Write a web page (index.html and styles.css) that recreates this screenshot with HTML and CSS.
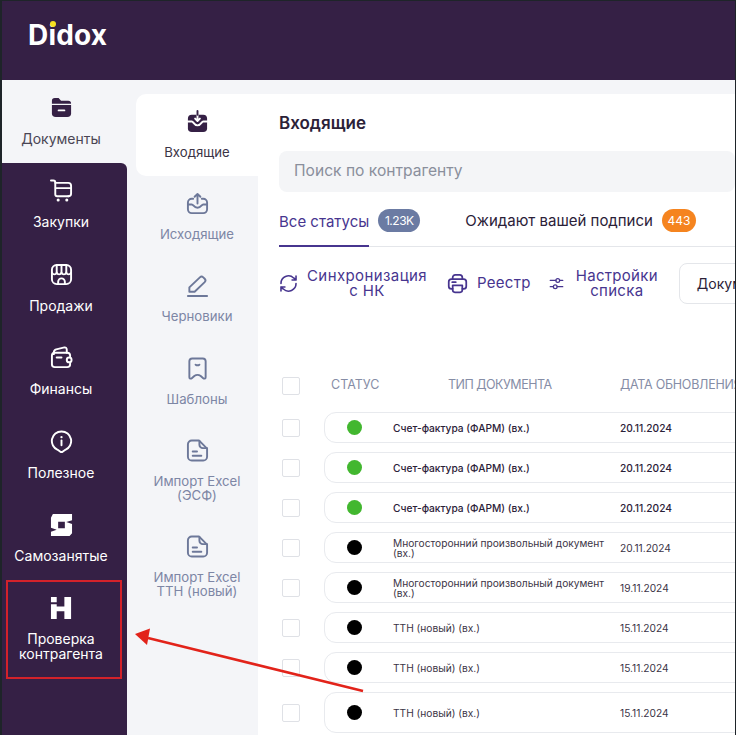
FILE: index.html
```html
<!DOCTYPE html>
<html lang="ru">
<head>
    <meta charset="UTF-8">
    <meta name="viewport" content="width=device-width, initial-scale=1.0">
    <title>Didox</title>
    <link rel="stylesheet" href="styles.css">
</head>
<body>
<div class="app">
    <div class="header">
        <div class="logo">Didox<span class="logo-dot"></span></div>
    </div>

    <div class="layout">
        <!-- главное меню -->
        <div class="side">
            <a class="side-item active">
                <svg class="icon" viewBox="0 0 24 24"><path class="solid" d="M2 5a3 3 0 0 1 3-3h4l2.500 3H19a3 3 0 0 1 3 3H2z"/><path class="solid" d="M2 9.500h20V18a4 4 0 0 1-4 4H6a4 4 0 0 1-4-4z"/><path class="cut" d="M9 15h6"/></svg>
                <span>Документы</span>
            </a>
            <a class="side-item">
                <svg class="icon" viewBox="0 0 24 24"><path d="M1 1.500h2.500a2 2 0 0 1 2 2V16a2 2 0 0 0 2 2h12"/><path d="M5.500 4H19a3 3 0 0 1 3 3v8a3 3 0 0 1-3 3"/><path d="M6 9.500h16"/><circle class="fill-white" cx="8.500" cy="22" r="1.600"/><circle class="fill-white" cx="17.500" cy="22" r="1.600"/></svg>
                <span>Закупки</span>
            </a>
            <a class="side-item">
                <svg class="icon" viewBox="0 0 24 24"><rect x="2" y="2" width="20" height="20" rx="5"/><path d="M2 10c1.200 2.500 4 2.500 5 0 1 2.500 4 2.500 5 0 1 2.500 4 2.500 5 0 1 2.500 3.800 2.500 5 0"/><path d="M7 2v8M12 2v8M17 2v8"/><path d="M8.500 22v-2.500a3.500 3.500 0 0 1 7 0V22"/></svg>
                <span>Продажи</span>
            </a>
            <a class="side-item">
                <svg class="icon" viewBox="0 0 24 24"><path d="M4 8.500V6.500C4 5 5 4 6.500 3.500L15 1.500c1.500-.3 2.500.7 2.500 2.500v3"/><path d="M21 11V10a3 3 0 0 0-3-3H5a3 3 0 0 0-3 3v9a3 3 0 0 0 3 3h13a3 3 0 0 0 3-3v-1"/><path d="M7 12h5"/><circle cx="20" cy="14.500" r="2.500"/></svg>
                <span>Финансы</span>
            </a>
            <a class="side-item">
                <svg class="icon" viewBox="0 0 24 24"><path d="M12 1.500a10 10 0 0 1 4 19.200L12 23.500l-4-2.800a10 10 0 0 1 4-19.200z"/><path d="M12 11v5"/><circle class="fill-white" cx="12" cy="7.500" r="1.200"/></svg>
                <span>Полезное</span>
            </a>
            <a class="side-item">
                <svg class="icon" viewBox="0 0 24 24"><path class="logo-shape" fill-rule="evenodd" d="M3 1H23V7.500L17 9.500 23 11.500V21L20 24.500H1V19.500L7 17.500 1 15.500V5zM8.500 9h7v7h-7z"/></svg>
                <span>Самозанятые</span>
            </a>
            <a class="side-item">
                <svg class="icon" viewBox="0 0 24 24"><path class="logo-shape" d="M1 1h6v5.500H1zM1 8.500h6V11h8V1h7v23h-7v-8H7v8H1z"/></svg>
                <span>Проверка<br>контрагента</span>
            </a>
            <div class="side-rest"></div>
        </div>

        <div class="work">
            <!-- папки документов -->
            <div class="folders">
                <a class="folder active">
                    <svg class="icon" viewBox="0 0 24 24"><path class="solid" d="M6 5h12a4 4 0 0 1 4 4v10a4 4 0 0 1-4 4H6a4 4 0 0 1-4-4V9a4 4 0 0 1 4-4z"/><path class="cut" d="M2 12h4c2 0 2 4 6 4s4-4 6-4h4"/><path class="cut" d="M12 5v6M9.500 9l2.500 2.500L14.500 9"/><path class="dark-line" d="M12 1v4"/></svg>
                    <span>Входящие</span>
                </a>
                <a class="folder">
                    <svg class="icon" viewBox="0 0 24 24"><path d="M7.500 7H6a4 4 0 0 0-4 4v7a4 4 0 0 0 4 4h12a4 4 0 0 0 4-4v-7a4 4 0 0 0-4-4h-1.500"/><path d="M2 13h4c2 0 2 3.500 6 3.500s4-3.500 6-3.500h4"/><path d="M12 12V2M9 5l3-3 3 3"/></svg>
                    <span>Исходящие</span>
                </a>
                <a class="folder">
                    <svg class="icon" viewBox="0 0 24 24"><path d="M3.500 18.500v-4.500L14.500 3.500a2.500 2.500 0 0 1 3.500 0l1.500 1.500a2.500 2.500 0 0 1 0 3.500L9 18.500z"/><path d="M2 23h20"/></svg>
                    <span>Черновики</span>
                </a>
                <a class="folder mid">
                    <svg class="icon" viewBox="0 0 24 24"><path d="M6.500 1.500h11a3 3 0 0 1 3 3V21c0 1.500-1.500 2-2.500 1.200l-3-2.700c-1.500-1-4.500-1-6 0l-3 2.700c-1 .8-2.500.3-2.500-1.200V4.500a3 3 0 0 1 3-3z"/><path d="M10 8c1 .7 3 .7 4 0"/></svg>
                    <span>Шаблоны</span>
                </a>
                <a class="folder tall">
                    <svg class="icon" viewBox="0 0 24 24"><path d="M13.500 1.500H6a4 4 0 0 0-4 4v13a4 4 0 0 0 4 4h12a4 4 0 0 0 4-4V10z"/><path d="M14 2v4a3.500 3.500 0 0 0 3.500 3.500H22"/><path d="M7 13h4.500M7 17.500h9"/></svg>
                    <span>Импорт Excel<br>(ЭСФ)</span>
                </a>
                <a class="folder tall">
                    <svg class="icon" viewBox="0 0 24 24"><path d="M13.500 1.500H6a4 4 0 0 0-4 4v13a4 4 0 0 0 4 4h12a4 4 0 0 0 4-4V10z"/><path d="M14 2v4a3.500 3.500 0 0 0 3.500 3.500H22"/><path d="M7 13h4.500M7 17.500h9"/></svg>
                    <span>Импорт Excel<br>ТТН (новый)</span>
                </a>
            </div>

            <div class="main">
                <h1>Входящие</h1>
                <div class="search">Поиск по контрагенту</div>

                <div class="tabs">
                    <div class="tab active">Все статусы</div>
                    <span class="badge gray">1.23K</span>
                    <div class="tab second">Ожидают вашей подписи</div>
                    <span class="badge orange">443</span>
                </div>

                <div class="toolbar">
                    <a class="tool sync">
                        <svg class="tool-icon" viewBox="0 0 24 24"><path d="M2.500 12a9.500 9.500 0 0 1 16-7l3 2.500M21.500 2.500v5h-5"/><path d="M21.500 12a9.500 9.500 0 0 1-16 7l-3-2.500M2.500 21.500v-5h5"/></svg>
                        <span>Синхронизация<br>с НК</span>
                    </a>
                    <a class="tool print">
                        <svg class="tool-icon wide" viewBox="0 0 24 24"><path d="M6.500 7V5a3 3 0 0 1 3-3h5a3 3 0 0 1 3 3v2"/><path d="M6.500 18H5a3 3 0 0 1-3-3v-5a3 3 0 0 1 3-3h14a3 3 0 0 1 3 3v5a3 3 0 0 1-3 3h-1.500"/><path d="M6.500 14h11v5.500a2.500 2.500 0 0 1-2.500 2.500H9a2.500 2.500 0 0 1-2.500-2.500z"/><path d="M6 10.500h4"/></svg>
                        <span>Реестр</span>
                    </a>
                    <a class="tool options">
                        <svg class="tool-icon small" viewBox="0 0 24 24"><path d="M2 7h9M17 7h5M2 17h5M13 17h9"/><circle cx="14" cy="7" r="3"/><circle cx="10" cy="17" r="3"/></svg>
                        <span>Настройки<br>списка</span>
                    </a>
                    <div class="select">Документы</div>
                </div>

                <div class="table">
                    <div class="table-head">
                        <span class="check"></span>
                        <span class="th th-status">СТАТУС</span>
                        <span class="th th-type">ТИП ДОКУМЕНТА</span>
                        <span class="th">ДАТА ОБНОВЛЕНИЯ</span>
                    </div>
                    <div class="row-wrap">
                        <span class="check"></span>
                        <div class="row"><i class="dot green"></i><span class="doc strong">Счет-фактура (ФАРМ) (вх.)</span><span class="date strong">20.11.2024</span></div>
                    </div>
                    <div class="row-wrap">
                        <span class="check"></span>
                        <div class="row"><i class="dot green"></i><span class="doc strong">Счет-фактура (ФАРМ) (вх.)</span><span class="date strong">20.11.2024</span></div>
                    </div>
                    <div class="row-wrap">
                        <span class="check"></span>
                        <div class="row"><i class="dot green"></i><span class="doc strong">Счет-фактура (ФАРМ) (вх.)</span><span class="date strong">20.11.2024</span></div>
                    </div>
                    <div class="row-wrap">
                        <span class="check"></span>
                        <div class="row"><i class="dot"></i><span class="doc">Многосторонний произвольный документ (вх.)</span><span class="date">20.11.2024</span></div>
                    </div>
                    <div class="row-wrap">
                        <span class="check"></span>
                        <div class="row"><i class="dot"></i><span class="doc">Многосторонний произвольный документ (вх.)</span><span class="date">19.11.2024</span></div>
                    </div>
                    <div class="row-wrap">
                        <span class="check"></span>
                        <div class="row"><i class="dot"></i><span class="doc">ТТН (новый) (вх.)</span><span class="date">15.11.2024</span></div>
                    </div>
                    <div class="row-wrap">
                        <span class="check"></span>
                        <div class="row"><i class="dot"></i><span class="doc">ТТН (новый) (вх.)</span><span class="date">15.11.2024</span></div>
                    </div>
                    <div class="row-wrap last">
                        <span class="check"></span>
                        <div class="row"><i class="dot"></i><span class="doc">ТТН (новый) (вх.)</span><span class="date">15.11.2024</span></div>
                    </div>
                </div>
            </div>
        </div>
    </div>

    <!-- пометки поверх скриншота -->
    <div class="mark-box"></div>
    <svg class="mark-arrow" viewBox="0 0 736 735"><path d="M363 691L148 638"/><path class="arrow-head" d="M135 634L150 628.500 147 645z"/></svg>
</div>
</body>
</html>
```

FILE: styles.css
```css
html, body {
    margin: 0;
    padding: 0;
    height: 100%;
    overflow: hidden;
}

body {
    font-family: Inter, "Liberation Sans", sans-serif;
    background-color: #fff;
    color: #2b2138;
}

a {
    text-decoration: none;
}

.app {
    position: relative;
    display: flex;
    flex-direction: column;
    height: 735px;
    box-sizing: border-box;
    border-left: 2px solid #1e2429;
    border-right: 1px solid #1e2429;
    border-top: 1px solid #1e2429;
    overflow: hidden;
}

.header {
    flex: none;
    height: 79px;
    background-color: #352045;
}

.logo {
    position: relative;
    display: inline-block;
    margin: 17px 0 0 26px;
    font-size: 28px;
    line-height: 34px;
    font-weight: 700;
    letter-spacing: 0.2px;
    color: #fff;
}

.logo-dot {
    position: absolute;
    left: 22px;
    top: 3px;
    width: 6px;
    height: 6px;
    border-radius: 50%;
    background-color: #f6e020;
}

.layout {
    flex: 1;
    display: flex;
    min-height: 0;
}

/* главное меню */
.side {
    flex: none;
    width: 125px;
    display: flex;
    flex-direction: column;
    background-color: #f4f5f8;
}

.side-item {
    flex: none;
    height: 83.4px;
    box-sizing: border-box;
    padding: 16px 7px 0 0;
    display: flex;
    flex-direction: column;
    align-items: center;
    background-color: #352045;
    color: #fff;
    font-size: 14px;
    line-height: 15px;
    text-align: center;
}

.side-item .icon {
    margin-bottom: 12px;
    stroke: #fff;
}

.side-item.active {
    background-color: #f4f5f8;
    color: #4a4554;
    border-bottom-left-radius: 6px;
}

.side-item.active + .side-item {
    border-top-right-radius: 6px;
}

.side-rest {
    flex: 1;
    background-color: #352045;
}

.icon {
    width: 23px;
    height: 23px;
    flex: none;
    fill: none;
    stroke-width: 2;
    stroke-linecap: round;
    stroke-linejoin: round;
}

.icon .solid {
    fill: #352045;
    stroke: none;
}

.icon .cut {
    stroke: #fff;
    fill: none;
}

.icon .dark-line {
    stroke: #352045;
}

.icon .fill-white {
    fill: #fff;
    stroke: none;
}

.icon .logo-shape {
    fill: #fff;
    stroke: none;
}

.work {
    flex: 1;
    display: flex;
    min-width: 0;
    padding-top: 14px;
    background-color: #f4f5f8;
}

/* папки */
.folders {
    flex: none;
    width: 131px;
    box-sizing: border-box;
    padding-left: 9px;
}

.folder {
    height: 82px;
    box-sizing: border-box;
    padding-top: 16px;
    display: flex;
    flex-direction: column;
    align-items: center;
    color: #7d86a5;
    font-size: 13.200px;
    line-height: 14px;
    text-align: center;
}

.folder .icon {
    margin-bottom: 12px;
    stroke: #6d7899;
}

.folder.mid {
    height: 83px;
    padding-top: 17px;
}

.folder.tall {
    height: 96px;
}

.folder.active {
    background-color: #fff;
    color: #3b3446;
    border-radius: 10px 0 0 10px;
}

.main {
    flex: 1;
    min-width: 0;
    padding-left: 21px;
    background-color: #fff;
    overflow: hidden;
}

h1 {
    margin: 18px 0 0;
    font-size: 17px;
    line-height: 22px;
    font-weight: 600;
    color: #2b2138;
}

.search {
    margin-top: 17px;
    height: 41px;
    padding-left: 15px;
    line-height: 39px;
    border-radius: 8px;
    background-color: #f4f5f7;
    color: #8a8f9c;
    font-size: 15.600px;
}

.tabs {
    display: flex;
    align-items: center;
    height: 55px;
    box-sizing: border-box;
    border-bottom: 1px solid #e4e6ea;
    padding-bottom: 1px;
}

.tab {
    height: 55px;
    line-height: 60px;
    box-sizing: border-box;
    font-size: 15px;
    color: #2b2138;
    white-space: nowrap;
}

.tab.active {
    color: #47358f;
    border-bottom: 2px solid #47358f;
    margin-bottom: -1px;
}

.tab.second {
    margin-left: 45px;
}

.badge {
    margin: 4px 0 0 9px;
    height: 23px;
    line-height: 23px;
    border-radius: 12px;
    font-size: 12px;
    color: #fff;
    text-align: center;
}

.badge.gray {
    width: 42px;
    background-color: #6b7ba3;
    letter-spacing: -0.5px;
}

.badge.orange {
    width: 34px;
    background-color: #f5841f;
}

.toolbar {
    display: flex;
    align-items: center;
    height: 42px;
    margin-top: 15px;
}

.tool {
    display: flex;
    align-items: center;
    color: #47358f;
    font-size: 15px;
    line-height: 15px;
    letter-spacing: 0.3px;
    text-align: center;
    white-space: nowrap;
}

.tool span {
    padding-bottom: 1px;
}

.tool-icon {
    width: 19px;
    height: 19px;
    flex: none;
    fill: none;
    stroke: #47358f;
    stroke-width: 2;
    stroke-linecap: round;
    stroke-linejoin: round;
}

.tool-icon.wide {
    width: 21px;
    height: 21px;
}

.tool-icon.small {
    width: 15px;
    height: 15px;
}

.sync {
    letter-spacing: 0.4px;
}

.sync span {
    margin-left: 9px;
}

.print {
    margin-left: 20px;
}

.print span {
    margin-left: 9px;
}

.options {
    margin-left: 18px;
}

.options span {
    margin-left: 12px;
}

.select {
    flex: none;
    margin-left: 21px;
    height: 41px;
    width: 120px;
    box-sizing: border-box;
    padding-left: 17px;
    line-height: 39px;
    border: 1px solid #e4e6ea;
    border-radius: 8px;
    font-size: 14px;
    color: #2b2138;
}

/* таблица */
.table {
    margin-top: 73px;
    padding-left: 3px;
}

.table-head {
    display: flex;
    align-items: center;
    height: 18px;
    margin-bottom: 17px;
    white-space: nowrap;
}

.check {
    flex: none;
    width: 18px;
    height: 18px;
    box-sizing: border-box;
    border: 1px solid #dfe1e6;
    border-radius: 2px;
    background-color: #fff;
}

.th {
    flex: none;
    padding-bottom: 3px;
    font-size: 12.500px;
    letter-spacing: -0.25px;
    color: #868da6;
}

.th-status {
    margin-left: 31px;
    width: 117px;
    letter-spacing: 0;
}

.th-type {
    width: 172px;
    letter-spacing: -0.5px;
}

.row-wrap {
    display: flex;
    align-items: center;
    height: 31px;
    margin-bottom: 9px;
}

.row-wrap.last {
    height: 41px;
}

.row {
    flex: none;
    width: 440px;
    height: 100%;
    box-sizing: border-box;
    margin-left: 24px;
    display: flex;
    align-items: center;
    border: 1px solid #e8eaee;
    border-radius: 12px;
}

.dot {
    flex: none;
    width: 15px;
    height: 15px;
    margin-left: 22px;
    border-radius: 50%;
    background-color: #000;
}

.dot.green {
    background-color: #42b72f;
}

.doc {
    flex: none;
    width: 227px;
    margin-left: 31px;
    font-size: 10.200px;
    line-height: 10px;
    color: #3b3446;
}

.date {
    font-size: 10.200px;
    color: #3b3446;
}

.strong {
    font-weight: 500;
    color: #2b2138;
}

/* пометки */
.mark-box {
    position: absolute;
    left: 4px;
    top: 579px;
    width: 116px;
    height: 99px;
    box-sizing: border-box;
    border: 2px solid #d3222a;
}

.mark-arrow {
    position: absolute;
    left: -2px;
    top: -1px;
    width: 736px;
    height: 735px;
    fill: none;
    stroke: #e2231a;
    stroke-width: 2.500;
    pointer-events: none;
}

.mark-arrow .arrow-head {
    fill: #e2231a;
    stroke: none;
}
```
